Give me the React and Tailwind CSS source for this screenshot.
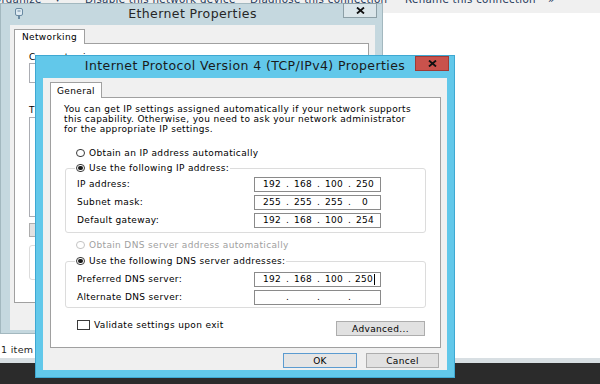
import React from "react";

function Radio({ checked = false, disabled = false }) {
  return (
    <span
      className={
        disabled
          ? "w-[9px] h-[8px] rounded-full border border-[#c4c4c4] bg-white shrink-0"
          : "w-[9px] h-[8px] rounded-full border border-[#3a3a3a] bg-white flex items-center justify-center shrink-0"
      }
    >
      {checked && <span className="w-[5px] h-[4px] rounded-full bg-[#1a1a1a]" />}
    </span>
  );
}

function IPField({ octets = ["", "", "", ""], caret = false }) {
  return (
    <div className="w-[127px] h-[15px] border border-[#8a8a8a] bg-white flex items-center pl-[5px] leading-none">
      {octets.map((o, i) => (
        <React.Fragment key={i}>
          {i > 0 && <span className="w-[7px] text-center">.</span>}
          <span className="w-[24px] flex justify-center items-center">
            {o}
            {caret && i === 3 && <span className="w-px h-[11px] bg-black ml-[1px]" />}
          </span>
        </React.Fragment>
      ))}
    </div>
  );
}

function FieldRow({ label, children }) {
  return (
    <div className="flex items-center h-[18px]">
      <span className="w-[177px] whitespace-nowrap">{label}</span>
      {children}
    </div>
  );
}

function CloseX() {
  return (
    <svg width="9" height="7" viewBox="0 0 9 7">
      <path d="M1 0.5 L8 6.5 M8 0.5 L1 6.5" stroke="#111" strokeWidth="1.8" />
    </svg>
  );
}

export default function App() {
  return (
    <div className="relative w-[600px] h-[384px] overflow-hidden bg-white font-['DejaVu_Sans',sans-serif] text-black">
      {/* Explorer background */}
      <div className="flex flex-col h-full">
        <div className="h-[13px] bg-[#f0f0f0] overflow-hidden shrink-0 text-[10.3px] tracking-[0.3px] text-[#1e395b] leading-[12px]">
          <div className="flex -mt-[7px] whitespace-nowrap">
            <span className="w-[92px] -ml-[7px] shrink-0 flex items-center">
              Organize<span className="ml-[13px] text-[8px]">▼</span>
            </span>
            <span className="w-[165px] shrink-0">Disable this network device</span>
            <span className="w-[155px] shrink-0">Diagnose this connection</span>
            <span className="w-[143px] shrink-0">Rename this connection</span>
            <span className="shrink-0">»</span>
          </div>
        </div>
        <div className="flex-1 flex flex-col">
          <div className="mt-auto h-[14px] pl-[1px] text-[9.5px] tracking-[0.3px] leading-[12px] text-[#1e1e1e]">1 item</div>
        </div>
        <div className="h-[5px] bg-[#d8dfe3] shrink-0" />
        <div className="h-[21px] bg-[#2b2b2b] shrink-0" />
      </div>

      {/* Ethernet Properties window */}
      <div className="absolute left-0 top-[3px] w-[383px] h-[331px] bg-[#c5d8df] border border-[#a3b8bf] flex flex-col pl-[9px] pr-[7px] pb-[3px]">
        <div className="relative h-[21px] flex items-center justify-center shrink-0">
          <span className="absolute left-[5px] top-[4px]">
            <svg width="8" height="12" viewBox="0 0 8 12">
              <rect x="0.5" y="0.5" width="7" height="7" rx="1.5" fill="#dde9f1" stroke="#6a8aa2" />
              <rect x="2.5" y="2.5" width="3" height="1" fill="#6a8aa2" />
              <rect x="3" y="8" width="2" height="3" fill="#6a8aa2" />
            </svg>
          </span>
          <span className="text-[12.5px] tracking-[0.4px] text-[#262626] whitespace-nowrap">Ethernet Properties</span>
        </div>
        <div className="absolute top-[-1px] right-[5px] w-[34px] h-[15px] bg-[#dbe6ea] border border-[#8c9fa6] flex items-center justify-center">
          <CloseX />
        </div>
        <div className="flex-1 bg-[#f0f0f0] pt-[4px] pl-[4px] flex flex-col text-[9px] tracking-[0.35px] leading-[10px]">
          <div className="w-[71px] h-[15px] bg-white border border-[#a0a0a0] border-b-0 relative z-10 -mb-px flex items-center justify-center">
            Networking
          </div>
          <div className="w-[355px] h-[260px] bg-white border border-[#a0a0a0] pt-[8px] pl-[14px] flex flex-col">
            <div className="h-[10px] whitespace-nowrap">Connect using:</div>
            <div className="mt-[1px] w-[326px] h-[20px] border border-[#abadb3] bg-white" />
            <div className="mt-[22px] h-[10px] whitespace-nowrap">This connection uses the following items:</div>
            <div className="mt-[2px] w-[326px] h-[100px] border border-[#abadb3] bg-white" />
            <div className="mt-[6px] w-[75px] h-[14px] border border-[#adadad] bg-[#e1e1e1]" />
            <div className="mt-[8px] w-[326px] h-[35px] border border-[#dcdcdc] rounded-[3px]" />
          </div>
        </div>
      </div>

      {/* IPv4 Properties window */}
      <div className="absolute left-[35px] top-[55px] w-[420px] h-[323px] bg-[#62c8ea] border border-[#3ea8d2] flex flex-col px-[7px] pb-[7px]">
        <div className="h-[22px] flex items-center justify-center pb-[2px] shrink-0">
          <span className="text-[12.5px] tracking-[0.4px] text-[#1a1a1a] whitespace-nowrap">
            Internet Protocol Version 4 (TCP/IPv4) Properties
          </span>
        </div>
        <div className="absolute top-0 right-[5px] w-[34px] h-[15px] bg-[#c9524c] border border-[#9e3b36] flex items-center justify-center">
          <CloseX />
        </div>

        <div className="flex-1 bg-[#f0f0f0] pt-[4px] pl-[7px] flex flex-col text-[9px] tracking-[0.35px] leading-[10px]">
          <div className="w-[52px] h-[16px] bg-white border border-[#a0a0a0] border-b-0 relative z-10 -mb-px flex items-center justify-center">
            General
          </div>
          <div className="w-[391px] h-[251px] bg-white border border-[#a0a0a0] pt-[6px] flex flex-col">
            <div className="pl-[13px] whitespace-nowrap">
              <div>You can get IP settings assigned automatically if your network supports</div>
              <div>this capability. Otherwise, you need to ask your network administrator</div>
              <div>for the appropriate IP settings.</div>
            </div>

            <div className="mt-[13px] ml-[25px] h-[12px] flex items-center gap-[4px] whitespace-nowrap">
              <Radio />
              <span>Obtain an IP address automatically</span>
            </div>

            <fieldset className="mt-[3px] mx-[14px] border border-[#dcdcdc] rounded-[3px]">
              <legend className="ml-[9px] px-[1px] h-[12px] flex items-center gap-[4px] whitespace-nowrap">
                <Radio checked />
                <span>Use the following IP address:</span>
              </legend>
              <div className="pl-[11px] pt-[1px] pb-[3px]">
                <FieldRow label="IP address:">
                  <IPField octets={["192", "168", "100", "250"]} />
                </FieldRow>
                <FieldRow label="Subnet mask:">
                  <IPField octets={["255", "255", "255", "0"]} />
                </FieldRow>
                <FieldRow label="Default gateway:">
                  <IPField octets={["192", "168", "100", "254"]} />
                </FieldRow>
              </div>
            </fieldset>

            <div className="mt-[6px] ml-[25px] h-[12px] flex items-center gap-[4px] whitespace-nowrap text-[#a0a0a0]">
              <Radio disabled />
              <span>Obtain DNS server address automatically</span>
            </div>

            <fieldset className="mt-[4px] mx-[14px] border border-[#dcdcdc] rounded-[3px]">
              <legend className="ml-[9px] px-[1px] h-[12px] flex items-center gap-[4px] whitespace-nowrap">
                <Radio checked />
                <span>Use the following DNS server addresses:</span>
              </legend>
              <div className="pl-[11px] pt-[3px] pb-[1px]">
                <FieldRow label="Preferred DNS server:">
                  <IPField octets={["192", "168", "100", "250"]} caret />
                </FieldRow>
                <FieldRow label="Alternate DNS server:">
                  <IPField />
                </FieldRow>
              </div>
            </fieldset>

            <div className="mt-[11px] flex items-start justify-between pl-[26px] pr-[15px]">
              <div className="h-[12px] flex items-center gap-[4px] whitespace-nowrap">
                <span className="w-[13px] h-[10px] border border-[#3a3a3a] bg-white" />
                <span>Validate settings upon exit</span>
              </div>
              <div className="mt-[2px] w-[89px] h-[15px] border border-[#adadad] bg-[#e1e1e1] flex items-center justify-center">
                Advanced...
              </div>
            </div>
          </div>

          <div className="mt-[5px] flex justify-end gap-[9px] pr-[8px]">
            <div className="w-[74px] h-[15px] border border-[#5b9bd0] bg-[#e5e5e5] flex items-center justify-center">OK</div>
            <div className="w-[73px] h-[15px] border border-[#adadad] bg-[#e1e1e1] flex items-center justify-center">Cancel</div>
          </div>
        </div>
      </div>
    </div>
  );
}
